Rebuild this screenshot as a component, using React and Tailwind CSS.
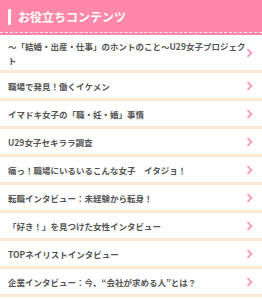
const items = [
  ["〜「結婚・出産・仕事」のホントのこと〜U29女子プロジェク", "ト"],
  ["職場で発見！働くイケメン"],
  ["イマドキ女子の「職・妊・婚」事情"],
  ["U29女子セキララ調査"],
  ["痛っ！職場にいるいるこんな女子　イタジョ！"],
  ["転職インタビュー：未経験から転身！"],
  ["「好き！」を見つけた女性インタビュー"],
  ["TOPネイリストインタビュー"],
  ["企業インタビュー：今、“会社が求める人”とは？"],
];

function Chevron() {
  return (
    <svg width="7" height="10" viewBox="0 0 7 10" className="shrink-0">
      <path d="M1.5 1.2 L5.3 5 L1.5 8.8" fill="none" stroke="#f799b8" strokeWidth="1.8" />
    </svg>
  );
}

export default function App() {
  return (
    <div
      className="w-[262px] h-[300px] overflow-hidden bg-white"
      style={{ fontFamily: '"Noto Sans CJK JP", "Noto Sans", sans-serif' }}
    >
      <div className="h-[35px] bg-[#ff88aa] pt-[2px]">
        <div className="flex h-[31px] items-center border-b border-dashed border-[#ffe3ec] pl-[8px]">
          <span className="mr-[7px] h-[16px] w-[3px] rounded-[1px] bg-white" />
          <span className="text-[12px] font-bold leading-none text-white">お役立ちコンテンツ</span>
        </div>
      </div>
      <ul>
        {items.map((lines, i) => (
          <li
            key={lines[0]}
            className={`flex items-center justify-between border-b-[3px] border-[#fcebd2] pl-[8px] pr-[9px] ${
              i === 0 ? "h-[38px]" : "h-[28px]"
            }`}
          >
            <div className="min-w-0 pr-[2px] text-[8.5px] font-bold leading-[14px] text-[#555]">
              {lines.map((line) => (
                <div key={line} className="whitespace-nowrap">
                  {line}
                </div>
              ))}
            </div>
            <Chevron />
          </li>
        ))}
      </ul>
    </div>
  );
}
